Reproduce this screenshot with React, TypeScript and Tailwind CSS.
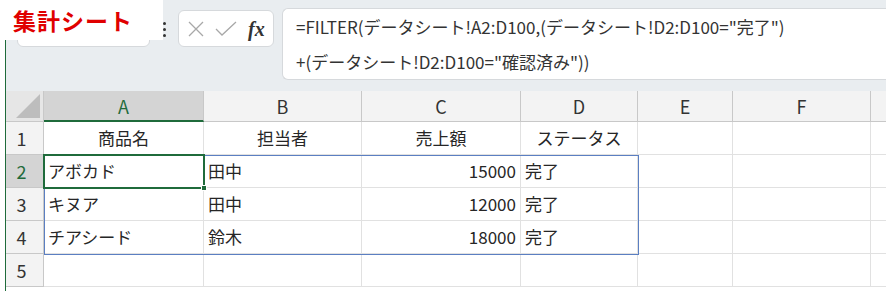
const COLS = [
  { key: "A", w: "w-[160px]" },
  { key: "B", w: "w-[158px]" },
  { key: "C", w: "w-[159px]" },
  { key: "D", w: "w-[117px]" },
  { key: "E", w: "w-[95px]" },
  { key: "F", w: "w-[138px]" },
  { key: "G", w: "w-[100px]" },
]

type Cell = { text: string; align?: "left" | "right" | "center" }

const ROWS: Cell[][] = [
  [
    { text: "商品名", align: "center" },
    { text: "担当者", align: "center" },
    { text: "売上額", align: "center" },
    { text: "ステータス", align: "center" },
  ],
  [{ text: "アボカド" }, { text: "田中" }, { text: "15000", align: "right" }, { text: "完了" }],
  [{ text: "キヌア" }, { text: "田中" }, { text: "12000", align: "right" }, { text: "完了" }],
  [{ text: "チアシード" }, { text: "鈴木" }, { text: "18000", align: "right" }, { text: "完了" }],
  [],
]

const font = "font-['Noto_Sans_CJK_JP','Noto_Sans',sans-serif]"

export default function App() {
  return (
    <div className={`relative w-[886px] h-[291px] overflow-hidden bg-white pl-[5px] ${font}`}>
      {/* sheet label pasted over the top-left */}
      <div className="absolute left-0 top-0 z-20 flex h-[40px] w-[163px] items-center bg-white pl-[13px]">
        <span className="text-[23px] font-bold leading-none tracking-[1px] text-[#e00000]">集計シート</span>
      </div>

      <div className="h-full border-l border-[#1f6b3b]">
        {/* formula bar */}
        <div className="flex h-[91px] items-start bg-[#e9edf0] pt-[8px]">
          <div className="mt-[2px] ml-[11px] flex h-[37px] w-[133px] shrink-0 items-center justify-between rounded-[6px] border border-[#d6d9dc] bg-white px-[10px]">
            <span className="text-[15px] text-[#a0a0a0]">A2</span>
            <svg width="14" height="9" viewBox="0 0 14 9" fill="none" stroke="#9a9a9a" strokeWidth="1.3">
              <path d="M1 1.5l6 6 6-6" />
            </svg>
          </div>
          <div className="mt-[14px] ml-[13px] flex shrink-0 flex-col gap-[3px]">
            <span className="h-[3px] w-[3px] rounded-full bg-[#333]" />
            <span className="h-[3px] w-[3px] rounded-full bg-[#333]" />
            <span className="h-[3px] w-[3px] rounded-full bg-[#333]" />
          </div>
          <div className="mt-[2px] ml-[12px] flex h-[37px] w-[96px] shrink-0 items-center rounded-[6px] border border-[#d6d9dc] bg-white pl-[8px]">
            <svg width="18" height="18" viewBox="0 0 18 18" fill="none" stroke="#a8a8a8" strokeWidth="1.3">
              <path d="M2 2l14 14M16 2L2 16" />
            </svg>
            <svg className="ml-[10px]" width="22" height="16" viewBox="0 0 22 16" fill="none" stroke="#a8a8a8" strokeWidth="1.3">
              <path d="M1 8l6 6L21 1" />
            </svg>
            <span className="ml-[11px] font-['Liberation_Serif',serif] text-[20px] font-bold italic leading-none text-[#333]">
              fx
            </span>
          </div>
          <div className="ml-[8px] flex h-[72px] flex-1 flex-col justify-center rounded-l-[6px] border border-r-0 border-[#d6d9dc] bg-white pl-[13px] text-[17px] leading-[35px] text-[#333]">
            <span className="whitespace-nowrap">=FILTER(データシート!A2:D100,(データシート!D2:D100="完了")</span>
            <span className="whitespace-nowrap">+(データシート!D2:D100="確認済み"))</span>
          </div>
        </div>

        {/* grid */}
        <div className="relative">
          {/* column headers */}
          <div className="flex h-[31px] bg-[#f3f3f3]">
            <div className="relative w-[38px] shrink-0 border-r border-b border-[#c8c8c8] bg-[#e6e6e6]">
              <svg className="absolute right-[3px] bottom-[3px]" width="24" height="24" viewBox="0 0 24 24">
                <path d="M24 0V24H0Z" fill="#bdbdbd" />
              </svg>
            </div>
            {COLS.map((c) => (
              <div
                key={c.key}
                className={`${c.w} shrink-0 text-center text-[18px] leading-[30px] ${
                  c.key === "A"
                    ? "border-b-2 border-r border-b-[#1f6b3b] border-r-[#c8c8c8] bg-[#d4d4d4] text-[#1f6b3b]"
                    : "border-r border-b border-[#c8c8c8] text-[#333]"
                }`}
              >
                {c.key === "G" ? "" : c.key}
              </div>
            ))}
          </div>

          {ROWS.map((row, i) => (
            <div key={i} className="flex h-[33px]">
              <div
                className={`w-[38px] shrink-0 border-r border-b border-[#c8c8c8] pr-[6px] text-center text-[18px] leading-[32px] ${
                  i === 1 ? "bg-[#d4d4d4] text-[#1f6b3b]" : "bg-[#f3f3f3] text-[#333]"
                }`}
              >
                {i + 1}
              </div>
              {COLS.map((c, j) => {
                const cell = row[j]
                return (
                  <div
                    key={c.key}
                    className={`${c.w} shrink-0 overflow-hidden whitespace-nowrap border-r border-b border-[#e1e1e1] px-[4px] text-[17px] leading-[32px] text-[#262626] ${
                      cell?.align === "right" ? "text-right" : cell?.align === "center" ? "text-center" : "text-left"
                    }`}
                  >
                    {cell?.text}
                  </div>
                )
              })}
            </div>
          ))}

          {/* spill range A2:D4 */}
          <div className="pointer-events-none absolute left-[38px] top-[64px] h-[100px] w-[595px] border-[1.5px] border-[#5b7fc2]" />
          {/* active cell A2 */}
          <div className="pointer-events-none absolute left-[37px] top-[63px] h-[35px] w-[162px] border-2 border-[#1f6b3b]" />
          <div className="absolute left-[195px] top-[94px] h-[6px] w-[6px] border border-white bg-[#1f6b3b]" />
        </div>
      </div>
    </div>
  )
}
